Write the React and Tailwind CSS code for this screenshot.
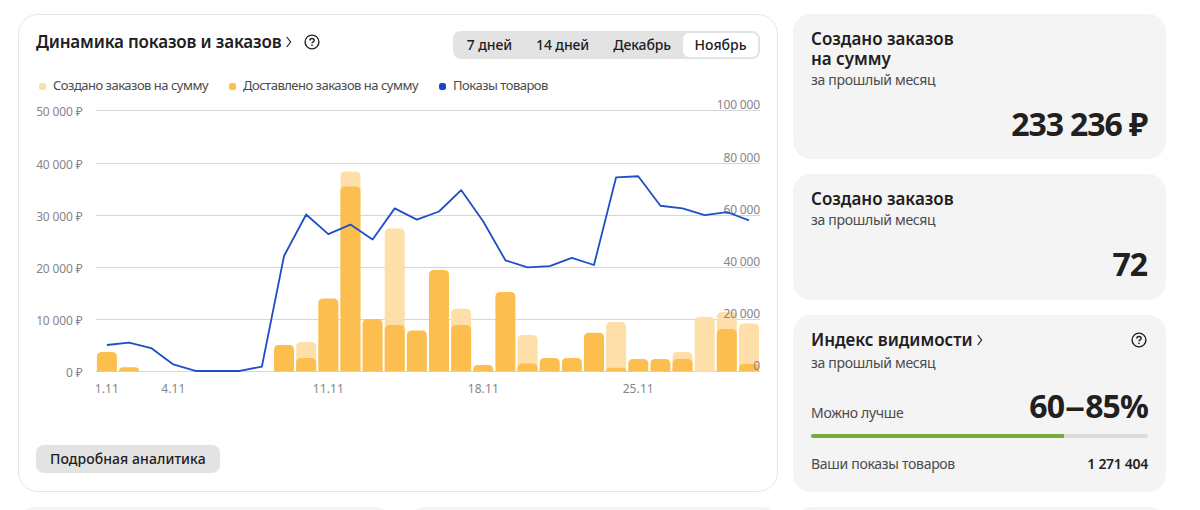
import clsx from 'clsx';

const PERIODS = ['7 дней', '14 дней', 'Декабрь', 'Ноябрь'];

// one entry per day of November: [created, delivered, views]
const DAYS = [
  [3750, 3750, 10150],
  [800, 800, 11100],
  [0, 0, 9000],
  [0, 0, 2700],
  [0, 0, 200],
  [0, 0, 200],
  [0, 0, 200],
  [0, 0, 1900],
  [5100, 5100, 44250],
  [5650, 2600, 60150],
  [14000, 14000, 52650],
  [38300, 35450, 56300],
  [10050, 10050, 50550],
  [27400, 8900, 62500],
  [7850, 7850, 58200],
  [19450, 19450, 61300],
  [12000, 8900, 69500],
  [1250, 1250, 57450],
  [15250, 15250, 42600],
  [7000, 1550, 39900],
  [2600, 2600, 40400],
  [2600, 2600, 43550],
  [7400, 7400, 40800],
  [9500, 700, 74400],
  [2400, 2400, 74800],
  [2400, 2400, 63500],
  [3750, 2400, 62500],
  [10450, 0, 59950],
  [11400, 8150, 61100],
  [9200, 1450, 57900],
];

const GRID = [
  { y: 12.5, left: '50 000 ₽', right: '100 000' },
  { y: 65.5, left: '40 000 ₽', right: '80 000' },
  { y: 117.5, left: '30 000 ₽', right: '60 000' },
  { y: 169.5, left: '20 000 ₽', right: '40 000' },
  { y: 221.5, left: '10 000 ₽', right: '20 000' },
  { y: 273.5, left: '0 ₽', right: '0' },
];

const DATES = [
  { day: 0, label: '1.11' },
  { day: 3, label: '4.11' },
  { day: 10, label: '11.11' },
  { day: 17, label: '18.11' },
  { day: 24, label: '25.11' },
];

const BASE = 273.5;
const HEIGHT = 261;
const STEP = 22.14;

const dayX = (i) => 70.9 + i * STEP;

const barPath = (i, value) => {
  const h = (value / 50000) * HEIGHT;
  const r = Math.min(5, h);
  const x = dayX(i) - 10;
  const y = BASE - h;
  return `M${x} ${BASE}V${y + r}q0 ${-r} ${r} ${-r}h${20 - 2 * r}q${r} 0 ${r} ${r}V${BASE}z`;
};

const HelpIcon = ({ className }) => (
  <svg className={clsx('size-4 shrink-0', className)} viewBox="0 0 16 16" fill="none" stroke="#21201f" strokeWidth="1.4">
    <circle cx="8" cy="8" r="6.9" />
    <path d="M5.8 6.6C5.8 5.2 6.8 4.5 8 4.5s2.2.7 2.2 1.9c0 1.4-2.2 1.5-2.2 2.9" />
    <path d="M8 10.4v1.6" />
  </svg>
);

const Chevron = () => (
  <svg className="h-3 w-2 shrink-0" viewBox="0 0 8 12" fill="none" stroke="#21201f" strokeWidth="1.2">
    <path d="M1.8 1l3.8 5-3.8 5" />
  </svg>
);

const LegendItem = ({ color, children }) => (
  <div className="flex items-center gap-[7px]">
    <span className={clsx('size-[7px] rounded-[2.5px]', color)}></span>
    <span>{children}</span>
  </div>
);

const Chart = () => {
  const line = DAYS.map(([, , views], i) => `${dayX(i)},${BASE - (views / 100000) * HEIGHT}`).join(' ');

  return (
    <svg className="block h-[300px] w-[724px] overflow-visible" viewBox="0 0 724 300">
      {GRID.map(({ y }) => (
        <line key={y} x1="60" x2="724" y1={y} y2={y} stroke="#d6d6d6" />
      ))}
      {DAYS.map(([created, delivered], i) => (
        <g key={i}>
          {created > delivered && <path d={barPath(i, created)} fill="#fedfa9" />}
          {delivered > 0 && <path d={barPath(i, delivered)} fill="#fdbe50" />}
        </g>
      ))}
      <g className="text-[12px] tracking-[-0.15px]" fill="#85858a">
        {GRID.map(({ y, left, right }) => (
          <g key={y} textAnchor="end">
            <text x="46.5" y={y + 5.5}>{left}</text>
            <text x="724" y={y - 1.5}>{right}</text>
          </g>
        ))}
      </g>
      <polyline points={line} fill="none" stroke="#1f4fc4" strokeWidth="1.8" strokeLinejoin="round" />
      <g className="text-[12px] tracking-[0.1px]" fill="#85858a" textAnchor="middle">
        {DATES.map(({ day, label }) => (
          <text key={label} x={dayX(day)} y="294.5">{label}</text>
        ))}
      </g>
    </svg>
  );
};

const StatCard = ({ title, value, className }) => (
  <section className={clsx('flex flex-col rounded-[18px] bg-[#f4f4f4] pr-[19px] pl-[18px] pt-[15px]', className)}>
    <h2 className="text-[17px] leading-5 font-semibold tracking-[-0.02px] whitespace-pre-line">{title}</h2>
    <p className="mt-px text-[14px] leading-5 tracking-[-0.3px] text-[#4b4b4b]">за прошлый месяц</p>
    <div className="mt-auto text-right text-[32px] leading-10 font-bold tracking-[-1.1px]">{value}</div>
  </section>
);

const App = () => (
  <div className="h-[510px] w-[1200px] overflow-hidden bg-white pt-[14px] pl-[18px] font-['Noto_Sans','Open_Sans',sans-serif] text-[#21201f]">
    <div className="flex gap-[15px]">
      <section className="h-[478px] w-[760px] rounded-[20px] border border-[#e6e6e6] px-[17px] pt-[15px]">
        <div className="flex h-[30px] items-start justify-between">
          <div className="flex items-center">
            <h2 className="text-[17px] leading-6 font-semibold tracking-[-0.17px]">Динамика показов и заказов</h2>
            <span className="ml-1"><Chevron /></span>
            <HelpIcon className="ml-[11px]" />
          </div>
          <div className="mt-px flex rounded-lg bg-[#e3e3e3] p-0.5 text-[14px] leading-6 font-medium">
            {PERIODS.map((period) => (
              <button
                key={period}
                className={clsx('rounded-md', period === 'Ноябрь' ? 'bg-white px-[11.5px]' : 'px-3 tracking-[-0.1px]')}
              >
                {period}
              </button>
            ))}
          </div>
        </div>

        <div className="mt-4 flex h-5 items-center gap-[21px] pl-[3px] text-[13px] tracking-[-0.5px] text-[#4b4b4b]">
          <LegendItem color="bg-[#fedfa9]">Создано заказов на сумму</LegendItem>
          <LegendItem color="bg-[#fdbe50]">Доставлено заказов на сумму</LegendItem>
          <LegendItem color="bg-[#1846c7]">Показы товаров</LegendItem>
        </div>

        <div className="mt-0.5">
          <Chart />
        </div>

        <button className="mt-[47px] h-7 rounded-lg bg-[#e3e3e3] px-[14px] pb-0.5 text-[14px] font-medium tracking-[0.07px]">
          Подробная аналитика
        </button>
      </section>

      <div className="flex w-[373px] flex-col gap-[15px]">
        <StatCard title={'Создано заказов\nна сумму'} value="233 236 ₽" className="h-[145px] pb-[15px]" />
        <StatCard title="Создано заказов" value="72" className="h-[126px] pb-4" />

        <section className="h-[177px] rounded-[18px] bg-[#f4f4f4] px-[18px] pt-[14px]">
          <div className="flex items-center pr-px">
            <h2 className="text-[17px] leading-[22px] font-semibold tracking-[-0.05px]">Индекс видимости</h2>
            <span className="ml-[3px]"><Chevron /></span>
            <HelpIcon className="ml-auto" />
          </div>
          <p className="mt-px text-[14px] leading-[22px] tracking-[-0.3px] text-[#4b4b4b]">за прошлый месяц</p>
          <div className="mt-3 flex items-end justify-between">
            <span className="text-[14px] leading-[26px] tracking-[-0.3px] text-[#4b4b4b]">Можно лучше</span>
            <span className="text-[32px] leading-10 font-bold tracking-[-0.9px]">
              60<span className="inline-block origin-center scale-x-125 px-[3px]">–</span>85%
            </span>
          </div>
          <div className="mt-2 h-1 rounded-full bg-[#dcdcdc]">
            <div className="h-1 w-3/4 rounded-l-full bg-[#75ab40]"></div>
          </div>
          <div className="mt-4 flex items-center justify-between text-[14px] leading-5 tracking-[-0.3px]">
            <span className="text-[#4b4b4b]">Ваши показы товаров</span>
            <span className="font-semibold">1 271 404</span>
          </div>
        </section>
      </div>
    </div>

    <div className="mt-[14.5px] flex gap-[15px]">
      <div className="h-20 w-[375px] rounded-[18px] bg-[#f4f4f4]"></div>
      <div className="h-20 w-[372px] rounded-[18px] bg-[#f4f4f4]"></div>
      <div className="h-20 w-[371px] rounded-[18px] bg-[#f4f4f4]"></div>
    </div>
  </div>
);

export default App;
